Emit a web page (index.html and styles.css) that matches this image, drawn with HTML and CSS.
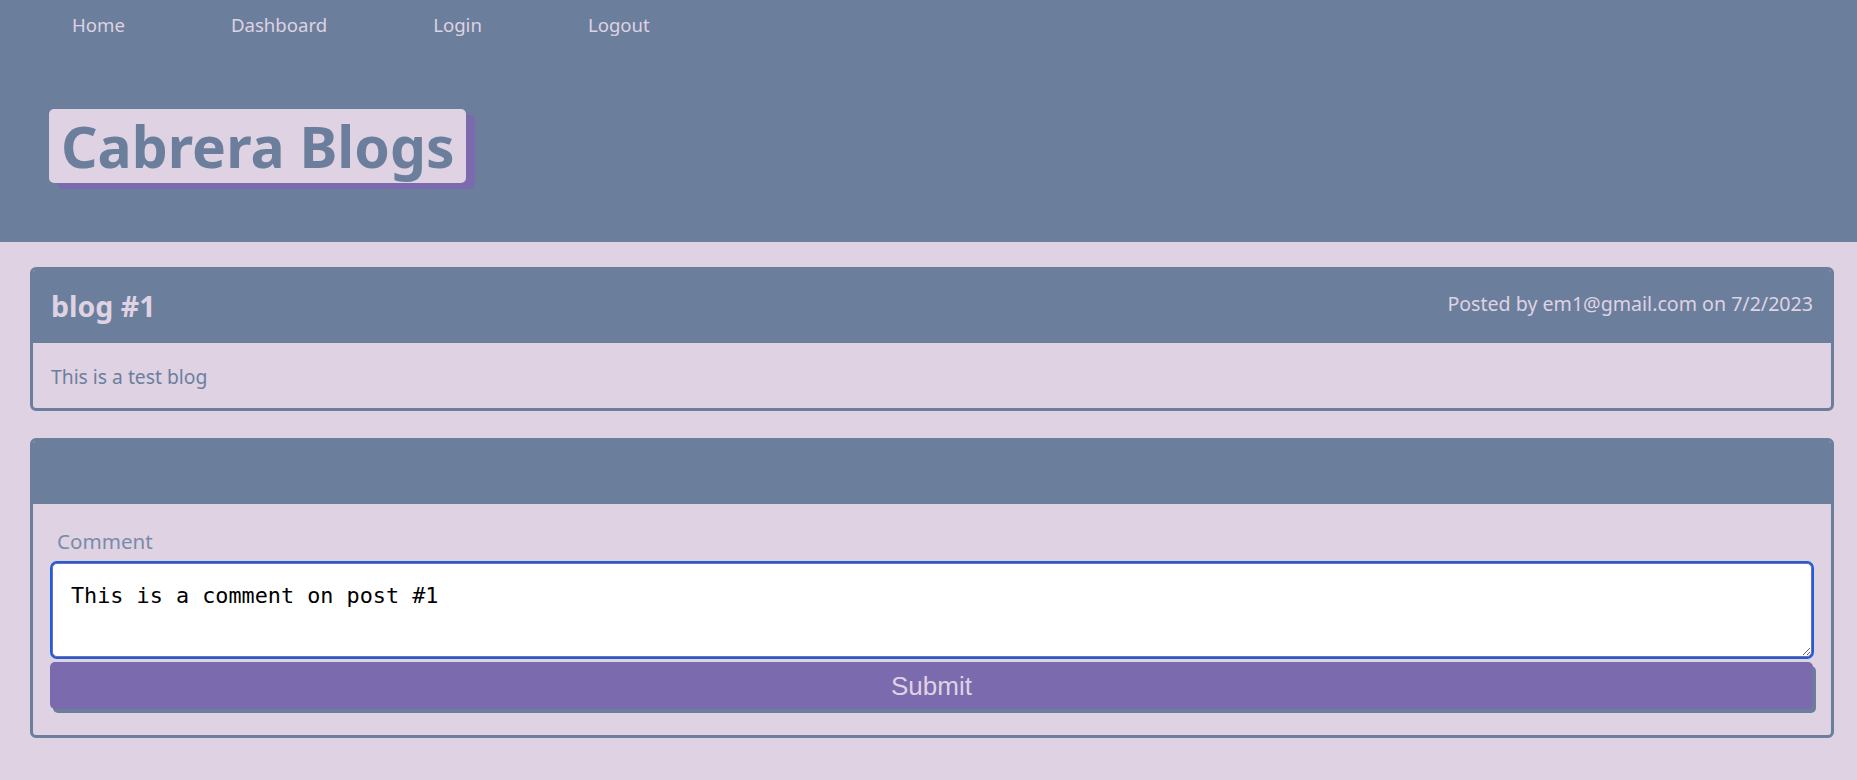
FILE: index.html
```html
<!DOCTYPE html>
<html lang="en">
<head>
<meta charset="utf-8">
<title>Cabrera Blogs</title>
<link rel="stylesheet" href="styles.css">
</head>
<body>
<header class="site-header">
  <nav class="nav">
    <a class="nav-link" href="#">Home</a>
    <a class="nav-link" href="#">Dashboard</a>
    <a class="nav-link" href="#">Login</a>
    <a class="nav-link" href="#">Logout</a>
  </nav>
  <h1 class="brand">Cabrera Blogs</h1>
</header>
<main class="main">
  <section class="card">
    <div class="card-head">
      <h2 class="post-title">blog #1</h2>
      <p class="post-meta">Posted by em1@gmail.com on 7/2/2023</p>
    </div>
    <div class="card-body">
      <p class="post-text">This is a test blog</p>
    </div>
  </section>
  <section class="card card-comment">
    <div class="card-head card-head-empty"></div>
    <form class="comment-form">
      <label class="comment-label" for="comment">Comment</label>
      <textarea class="comment-input" id="comment">This is a comment on post #1</textarea>
      <button class="submit-btn" type="button">Submit</button>
    </form>
  </section>
</main>
</body>
</html>
```

FILE: styles.css
```css
* { box-sizing: border-box; }

html, body {
  margin: 0;
  padding: 0;
}

body {
  background: #dfd2e3;
  font-family: "Noto Sans", "Open Sans", sans-serif;
  color: #6b7f9d;
}

.site-header {
  background: #6b7f9d;
  height: 242px;
  padding: 13px 0 0 0;
}

.nav {
  display: flex;
  gap: 106px;
  padding-left: 72px;
}

.nav-link {
  color: #dfd2e3;
  text-decoration: none;
  font-size: 18.6px;
  line-height: 24px;
}

.brand {
  display: inline-block;
  margin: 72px 0 0 49px;
  padding: 0 11px 0 12px;
  height: 74px;
  line-height: 74px;
  font-size: 57px;
  font-weight: 700;
  color: #6b7f9d;
  background: #dfd2e3;
  border-radius: 5px;
  box-shadow: 9px 6px 0 #7b6aad;
}

.main {
  padding: 25px 23px 0 30px;
  display: flex;
  flex-direction: column;
  gap: 27px;
}

.card {
  border: 3px solid #6b7f9d;
  border-radius: 6px;
  overflow: hidden;
}

.card-head {
  background: #6b7f9d;
  display: flex;
  justify-content: space-between;
  align-items: flex-start;
  padding: 15px 18px 0 18px;
  height: 73px;
}

.card-head-empty {
  height: 63px;
}

.post-title {
  margin: 0;
  font-size: 28.5px;
  line-height: 42px;
  font-weight: 700;
  color: #dfd2e3;
}

.post-meta {
  margin: 4px 0 0 0;
  font-size: 19.6px;
  line-height: 30px;
  color: #dfd2e3;
}

.card-body {
  padding: 19px 18px 16px 18px;
}

.post-text {
  margin: 0;
  font-size: 19.3px;
  line-height: 30px;
}

.comment-form {
  display: flex;
  flex-direction: column;
  padding: 22px 17px 26px 17px;
}

.comment-label {
  font-size: 20.6px;
  line-height: 30px;
  color: #7a8bab;
  margin-left: 7px;
}

.comment-input {
  margin: 7px 2px 0 2px;
  height: 94px;
  border: 1px solid #7b6aad;
  border-radius: 5px;
  box-shadow: 0 0 0 2px #1b5fd9;
  background: #fff;
  padding: 19px 18px 10px 18px;
  font-family: "DejaVu Sans Mono", "Liberation Mono", monospace;
  font-size: 21.8px;
  line-height: 26px;
  color: #000;
  outline: none;
}

.submit-btn {
  margin-top: 5px;
  height: 47px;
  width: calc(100% - 1px);
  background: #7b6aad;
  color: #dfd2e3;
  border: none;
  border-radius: 5px;
  box-shadow: 3px 4px 0 #6b7f9d;
  font-family: "Liberation Sans", Arial, sans-serif;
  font-size: 26px;
  line-height: 30px;
  padding: 0;
  cursor: pointer;
}
```
